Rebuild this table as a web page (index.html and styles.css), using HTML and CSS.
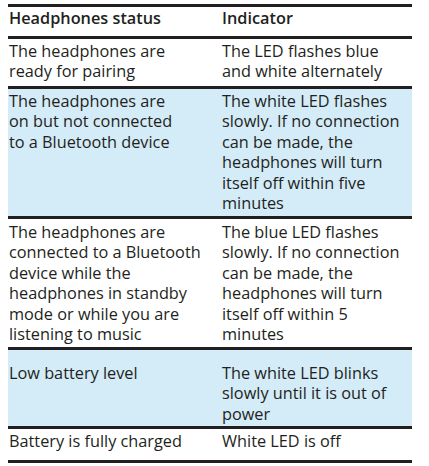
FILE: index.html
```html
<!DOCTYPE html>
<html>
<head>
<meta charset="utf-8">
<link rel="stylesheet" href="styles.css">
</head>
<body>
<div class="table">
  <div class="row row-head">
    <div class="cell">Headphones status</div>
    <div class="cell">Indicator</div>
  </div>
  <div class="row row-1">
    <div class="cell">The headphones are<br>ready for pairing</div>
    <div class="cell">The LED flashes blue<br>and white alternately</div>
  </div>
  <div class="row row-2 shaded">
    <div class="cell">The headphones are<br>on but not connected<br>to a Bluetooth device</div>
    <div class="cell">The white LED flashes<br>slowly. If no connection<br>can be made, the<br>headphones will turn<br>itself off within five<br>minutes</div>
  </div>
  <div class="row row-3">
    <div class="cell">The headphones are<br>connected to a Bluetooth<br>device while the<br>headphones in standby<br>mode or while you are<br>listening to music</div>
    <div class="cell">The blue LED flashes<br>slowly. If no connection<br>can be made, the<br>headphones will turn<br>itself off within 5<br>minutes</div>
  </div>
  <div class="row row-4 shaded">
    <div class="cell">Low battery level</div>
    <div class="cell">The white LED blinks<br>slowly until it is out of<br>power</div>
  </div>
  <div class="row row-5">
    <div class="cell">Battery is fully charged</div>
    <div class="cell">White LED is off</div>
  </div>
</div>
</body>
</html>
```
FILE: styles.css
```css
html, body {
  margin: 0;
  padding: 0;
  background: #ffffff;
}
body {
  font-family: "Open Sans", "Noto Sans", sans-serif;
  font-size: 16.3px;
  line-height: 20.4px;
  color: #231f20;
}
.table {
  margin: 4px 0 0 8px;
  width: 404px;
  border-bottom: 3px solid #231f20;
}
.row {
  display: grid;
  grid-template-columns: 213px 191px;
  border-top: 3px solid #231f20;
  box-sizing: border-box;
}
.cell {
  padding-left: 1px;
  white-space: nowrap;
}
.shaded {
  background: #d4ebf8;
}
.row-head {
  height: 32px;
  padding-top: 1px;
  font-weight: 600;
}
.row-1 { height: 50px; padding-top: 2px; }
.row-2 { height: 130px; padding-top: 2px; }
.row-3 { height: 131px; padding-top: 3px; }
.row-4 { height: 79px; padding-top: 13px; }
.row-5 { height: 34px; padding-top: 2px; }
```
